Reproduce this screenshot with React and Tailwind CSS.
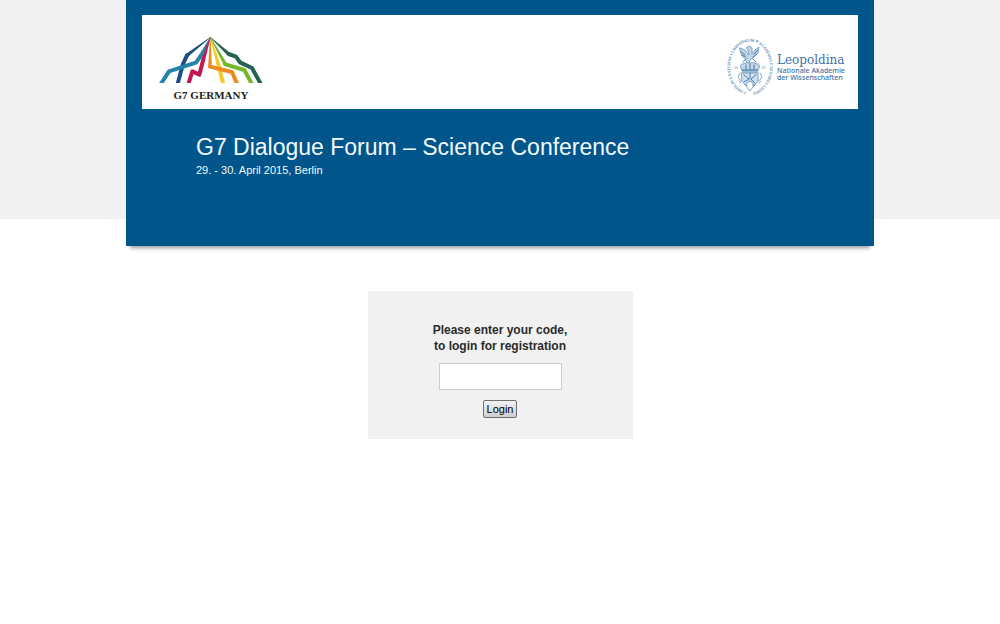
import React from 'react';

const APEX = [181, 22];

const rays = [
  { color: '#1b4f87', points: [[111, 76], [99, 102], [80, 172]] },
  { color: '#2482ab', points: [[153, 76], [138, 98], [100, 110], [57, 124], [26, 172]] },
  { color: '#c5174f', points: [[160, 88], [148, 134], [127, 124], [112, 172]] },
  { color: '#f6c928', points: [[205, 102], [222, 172]] },
  { color: '#ec8a22', points: [[180, 110], [246, 126], [266, 172]] },
  { color: '#73b72b', points: [[226, 103], [283, 120], [311, 172]] },
  { color: '#246352', points: [[236, 72], [258, 80], [270, 97], [306, 114], [338, 172]] },
];

// Each ray is a thin wedge from the top that turns into an even band
const Ray = ({ color, points }) => {
  const [x, y] = points[0];
  const dx = x - APEX[0];
  const dy = y - APEX[1];
  const len = Math.hypot(dx, dy);
  const nx = (-dy / len) * 5.5;
  const ny = (dx / len) * 5.5;

  return (
    <g>
      <polygon fill={color} points={`${APEX[0] - 1},${APEX[1]} ${APEX[0] + 1},${APEX[1]} ${x - nx},${y - ny} ${x + nx},${y + ny}`} />
      <polyline fill="none" stroke={color} strokeWidth="12" strokeLinejoin="round" strokeLinecap="round" points={points.map((p) => p.join(',')).join(' ')} />
    </g>
  );
};

const G7Logo = () => (
  <div className="flex w-[108px] flex-col items-center text-[#1d1d1b]">
    <svg viewBox="21 21 324 138" className="h-[46px] w-[108px]" aria-hidden="true">
      {rays.map((ray) => (
        <Ray key={ray.color} {...ray} />
      ))}
    </svg>
    <span className="mt-1 font-['Liberation_Serif',serif] text-[11px] leading-4 font-bold whitespace-nowrap">G7 GERMANY</span>
  </div>
);

const Seal = () => (
  <svg viewBox="0 0 48 60" className="h-[60px] w-[48px] overflow-visible" fill="none" stroke="#7fa6c8" strokeLinecap="round" strokeLinejoin="round" aria-hidden="true">
    <defs>
      <path id="seal-ring" d="M20 55A20 25.500 0 1 1 28 55" />
    </defs>
    <text fill="#5286b4" stroke="none" fontSize="4" fontFamily="'Liberation Serif', serif" fontWeight="bold">
      <textPath href="#seal-ring">CAROLINA NATURAE CURIOSORUM ✶ ACADEMIA CAESAREA LEOPOLDINO</textPath>
    </text>
    <g fill="#5286b4" stroke="none" fontSize="4" fontFamily="'Liberation Serif', serif">
      <text x="8" y="32">16</text>
      <text x="36" y="32">87</text>
    </g>
    {/* Eagle */}
    <path strokeWidth="1" fill="#c3d5e5" d="M14 11l5 2 4 5-1-5-2-2 3-2 3 2v6l3-4 4-3-1 6-4 4-4 3-1 4h-2l-1-4-4-4z" />
    <path strokeWidth="1" stroke="#4c80af" d="M14 14l5 4M16 18l4 2M32 13l-4 4M31 17l-4 3M20 22l-3 3M27 22l3 3" />
    {/* Crown */}
    <path strokeWidth="1" fill="#c5d7e6" d="M16 33c-3-4-1-7 2-6 1-2 3-1 6-1s5-1 6 1c3-1 5 2 2 6z" />
    <path strokeWidth="1" stroke="#3f78aa" d="M16 33h16M16 35h16M20 28v4M24 27v5M28 28v4" />
    {/* Shield with the two snakes */}
    <path strokeWidth="1" fill="#d3e1ec" d="M16 36h16v8l-4 5-4 2-4-2-4-5z" />
    <path strokeWidth="1" stroke="#4c80af" d="M18 38l5 4-5 3M30 38l-5 4 4 4M24 36v6M20 47l3-3M28 48l-3-4" />
    <path strokeWidth="1" d="M14 36l-2 4 3 4M34 36l2 4-3 4M15 46l-2-2M33 46l2-2" />
    <path strokeWidth="1" fill="#fff" d="M21 46l3-2 3 2v4l-3 4-3-4z" />
  </svg>
);

const LeopoldinaLogo = () => (
  <div className="flex items-center gap-[3px] text-[#3d6f9f]">
    <Seal />
    <div className="flex w-[68px] flex-col whitespace-nowrap">
      <span className="font-['DejaVu_Serif',serif] text-[12px] leading-[14px]">Leopoldina</span>
      <span className="font-['Noto_Sans',sans-serif] text-[7px] leading-[7px] font-medium">
        Nationale Akademie
        <br />
        der Wissenschaften
      </span>
    </div>
  </div>
);

const Header = () => (
  <header className="bg-[#00558b] px-4 pt-[15px] pb-[67px] text-[#f4f9fc] shadow-[0_6px_4px_-4px_rgba(0,0,0,0.4)]">
    <div className="flex items-start justify-between bg-white pt-[22px] pr-[13px] pb-[6px] pl-[15px]">
      <G7Logo />
      <LeopoldinaLogo />
    </div>
    <div className="pt-6 pl-[54px]">
      <h1 className="text-[23px] leading-7">G7 Dialogue Forum – Science Conference</h1>
      <p className="text-[11px] leading-[18px]">29. - 30. April 2015, Berlin</p>
    </div>
  </header>
);

const LoginForm = () => (
  <form className="mx-auto mt-[45px] flex w-[265px] flex-col items-center bg-[#f1f1f1] pt-[31px] pb-[21px]" onSubmit={(e) => e.preventDefault()}>
    <label htmlFor="code" className="text-center text-[12px] leading-4 font-bold text-[#2b2b2b]">
      Please enter your code,
      <br />
      to login for registration
    </label>
    <input id="code" type="text" className="mt-[9px] h-[27px] w-[123px] border border-[#cccccc] bg-white px-1 text-[12px]" />
    <button type="submit" className="mt-[10px] h-[18px] rounded-[2px] border border-[#707070] bg-linear-to-b from-[#f2f2f2] to-[#cfcfcf] px-[3px] text-[11px] leading-4 text-black">
      Login
    </button>
  </form>
);

export default function App() {
  return (
    <div className="min-h-screen bg-[linear-gradient(#f1f1f1_219px,#ffffff_219px)] font-['Liberation_Sans',Arial,sans-serif]">
      <div className="mx-auto w-full max-w-[748px]">
        <Header />
        <main>
          <LoginForm />
        </main>
      </div>
    </div>
  );
}
